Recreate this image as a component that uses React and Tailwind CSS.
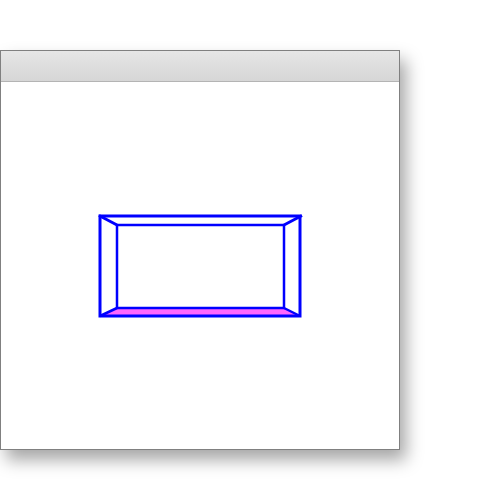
export default function App() {
  return (
    <div className="w-[500px] h-[500px] bg-white pt-[50px]">
      <div className="w-[400px] h-[400px] border border-[#808080] bg-white flex flex-col shadow-[6px_10px_16px_rgba(0,0,0,0.35)]">
        <div className="h-[31px] shrink-0 border-b border-[#b4b4b4] bg-gradient-to-b from-[#e6e6e6] to-[#d6d6d6]" />
        <div className="flex-1">
          <svg width="398" height="367" viewBox="0 0 398 367">
            <polygon points="99,234 299,234 283,226 116,226" fill="#ff66ff" />
            <g stroke="#0000ff" fill="none" strokeWidth="2.5">
              <rect x="116" y="143" width="167" height="83" />
              <line x1="98" y1="133.5" x2="116" y2="143" strokeWidth="3" />
              <line x1="301" y1="133.5" x2="283" y2="143" strokeWidth="3" />
              <line x1="99" y1="234" x2="116" y2="226" />
              <line x1="299" y1="234" x2="283" y2="226" />
              <rect x="99" y="134" width="200" height="100" strokeWidth="3" />
            </g>
          </svg>
        </div>
      </div>
    </div>
  );
}
